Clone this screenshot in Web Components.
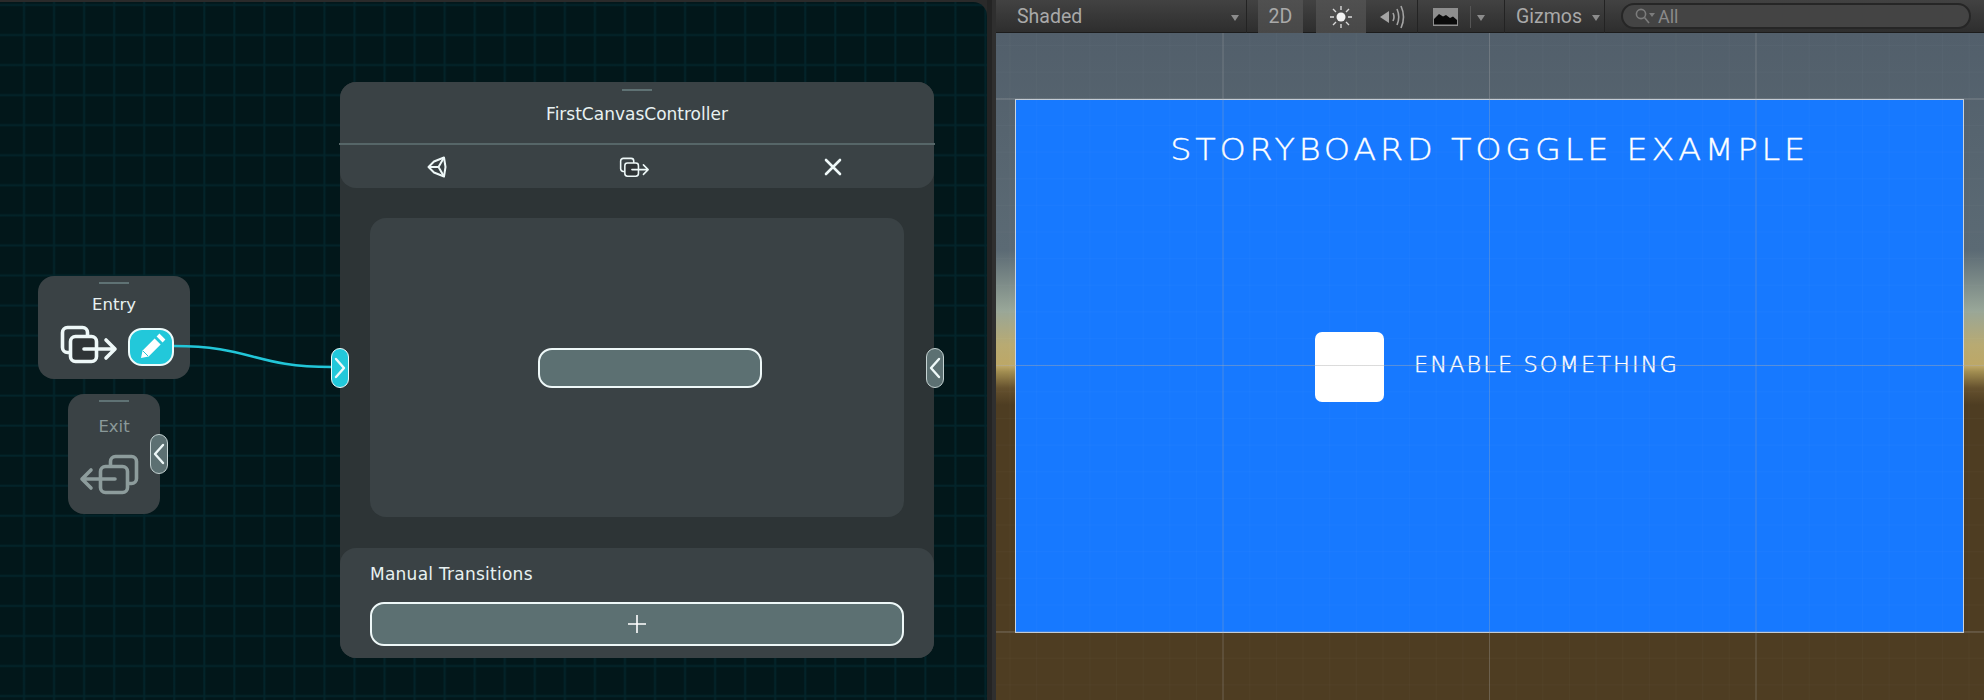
<!DOCTYPE html>
<html>
<head>
<meta charset="utf-8">
<title>Storyboard</title>
<style>
html, body { margin: 0; height: 100%; background: #2a2a2a; overflow: hidden; }
body { font-family: "DejaVu Sans", sans-serif; }
</style>
</head>
<body>
<app-shell>
  <graph-view slot="graph">
    <svg slot="wires" width="987" height="698" style="display:block">
      <path d="M174 344 C250 344 255 365 331 365" fill="none" stroke="#22c6d8" stroke-width="2.5"/>
    </svg>

    <graph-node name="Entry" style="--x:38px;--y:274px;--w:152px;--h:103px;--title-gap:11px;--row-gap:8px;--row-pad:20px">
      <ui-icon kind="enter" style="--iw:60px;--ih:42px"></ui-icon>
      <edit-button></edit-button>
    </graph-node>

    <graph-node name="Exit" dim style="--x:68px;--y:392px;--w:92px;--h:120px;--title-gap:15px;--row-gap:15px;--row-pad:10px">
      <ui-icon kind="exit" style="--iw:64px;--ih:46px"></ui-icon>
      <port-pin slot="ports" dir="left" style="--px:82px;--py:40px"></port-pin>
    </graph-node>

    <canvas-node name="FirstCanvasController" style="--x:340px;--y:80px">
      <port-pin slot="ports" dir="right" active style="--px:-9px;--py:266px"></port-pin>
      <port-pin slot="ports" dir="left" style="--px:586px;--py:266px"></port-pin>
      <ui-icon slot="actions" kind="unity" style="--iw:20px;--ih:22px;margin-right:2px"></ui-icon>
      <ui-icon slot="actions" kind="enter-small" style="--iw:32px;--ih:22px"></ui-icon>
      <ui-icon slot="actions" kind="close" style="--iw:20px;--ih:20px;margin-left:5px"></ui-icon>
    </canvas-node>
  </graph-view>

  <scene-view slot="scene">
    <scene-toolbar slot="toolbar"></scene-toolbar>
    <game-canvas title-text="STORYBOARD TOGGLE EXAMPLE" label="ENABLE SOMETHING"></game-canvas>
  </scene-view>
</app-shell>

<script>
const enterIcon = (w) => `<svg viewBox="0 0 60 42" fill="none" stroke="#eef8f8" stroke-width="${w}" stroke-linecap="round" stroke-linejoin="round">
    <rect x="4.5" y="4.5" width="25" height="25" rx="5"/>
    <rect x="12.5" y="13.5" width="26" height="25" rx="5" fill="#2f3436"/>
    <path d="M26 26H56M48 17L57 26L48 35"/></svg>`;

const ICONS = {
  enter: enterIcon(3.6),
  "enter-small": enterIcon(3),
  exit: `<svg viewBox="0 0 64 46" fill="none" stroke="#8d9c9c" stroke-width="3.6" stroke-linecap="round" stroke-linejoin="round">
    <rect x="32.5" y="4.5" width="26" height="27" rx="5"/>
    <rect x="22.5" y="14.5" width="27" height="26" rx="5" fill="#3a4245"/>
    <path d="M37 27H4M13 18L4 27L13 36"/></svg>`,
  unity: `<svg viewBox="0 0 20 22" fill="none" stroke="#eef8f8" stroke-width="2" stroke-linejoin="round">
    <path d="M1.5 11L7 5.5L17 1.5L18.5 11L17 20.5L7 16.5Z"/>
    <path d="M1.5 11H11.5M11.5 11L17 1.5M11.5 11L17 20.5"/></svg>`,
  close: `<svg viewBox="0 0 20 20" fill="none" stroke="#eef8f8" stroke-width="2.6" stroke-linecap="round">
    <path d="M3 3L17 17M17 3L3 17"/></svg>`,
};

class UiIcon extends HTMLElement {
  constructor() {
    super();
    this.attachShadow({ mode: "open" });
    this.shadowRoot.innerHTML = `<style>
      :host { display: block; width: var(--iw); height: var(--ih); flex: none; }
      svg { display: block; width: 100%; height: 100%; }
    </style>${ICONS[this.getAttribute("kind")] || ""}`;
  }
}
customElements.define("ui-icon", UiIcon);

const shellTemplate = document.createElement("template");
shellTemplate.innerHTML = `<style>
  :host { display: grid; grid-template-columns: 987px 9px 988px; width: 1984px; height: 700px; }
  .gutter { background: linear-gradient(90deg, #242424 0 5px, #2f2f2f 5px); }
</style>
<slot name="graph"></slot><div class="gutter"></div><slot name="scene"></slot>`;
class AppShell extends HTMLElement {
  constructor() {
    super();
    this.attachShadow({ mode: "open" });
    this.shadowRoot.appendChild(shellTemplate.content.cloneNode(true));
  }
}
customElements.define("app-shell", AppShell);

const graphTemplate = document.createElement("template");
graphTemplate.innerHTML = `<style>
  :host {
    display: block; position: relative; height: 698px; margin-top: 2px; overflow: hidden;
    border-radius: 0 14px 0 0;
    background-color: #02171a;
    background-image:
      linear-gradient(90deg, transparent 8.5px, #03242a 9.5px 10.5px, transparent 11.5px),
      linear-gradient(0deg, transparent 8.5px, #03242a 9.5px 10.5px, transparent 11.5px);
    background-size: 30.05px 30.05px;
    background-position: 14px 13px;
  }
  .wires { position: absolute; left: 0; top: 0; }
</style>
<slot></slot><div class="wires"><slot name="wires"></slot></div>`;
class GraphView extends HTMLElement {
  constructor() {
    super();
    this.attachShadow({ mode: "open" });
    this.shadowRoot.appendChild(graphTemplate.content.cloneNode(true));
  }
}
customElements.define("graph-view", GraphView);

const nodeTemplate = document.createElement("template");
nodeTemplate.innerHTML = `<style>
  :host {
    position: absolute; left: var(--x); top: var(--y); width: var(--w); height: var(--h);
    display: flex; flex-direction: column; align-items: center;
    background: #3a4245; border-radius: 16px; color: #e8f1f1;
    font: 16.5px/20px "DejaVu Sans", sans-serif;
  }
  :host([dim]) { color: #8a9999; }
  .handle { width: 30px; height: 2px; margin-top: 6px; background: #5f7274; flex: none; }
  .title { margin-top: var(--title-gap); }
  .row { align-self: stretch; display: flex; align-items: flex-start; gap: 10px; margin-top: var(--row-gap); padding-left: var(--row-pad); }
</style>
<div class="handle"></div>
<div class="title"></div>
<div class="row"><slot></slot></div>
<slot name="ports"></slot>`;
class GraphNode extends HTMLElement {
  constructor() {
    super();
    this.attachShadow({ mode: "open" });
    this.shadowRoot.appendChild(nodeTemplate.content.cloneNode(true));
    this.shadowRoot.querySelector(".title").textContent = this.getAttribute("name");
  }
}
customElements.define("graph-node", GraphNode);

const pinTemplate = document.createElement("template");
pinTemplate.innerHTML = `<style>
  :host {
    position: absolute; left: var(--px); top: var(--py); width: 18px; height: 40px; box-sizing: border-box;
    display: flex; align-items: center; justify-content: center;
    background: #5c7072; border: 1.5px solid #c4d2d2; border-radius: 9px;
  }
  :host([active]) { background: #22c8da; border-color: #eefbfb; }
  svg { display: block; }
</style>
<svg width="12" height="24" viewBox="0 0 12 24" fill="none" stroke="#eef8f8" stroke-width="2.4" stroke-linecap="round" stroke-linejoin="round"><path/></svg>`;
class PortPin extends HTMLElement {
  constructor() {
    super();
    this.attachShadow({ mode: "open" });
    this.shadowRoot.appendChild(pinTemplate.content.cloneNode(true));
    const d = this.getAttribute("dir") === "left" ? "M10 3L2 12L10 21" : "M2 3L10 12L2 21";
    this.shadowRoot.querySelector("path").setAttribute("d", d);
  }
}
customElements.define("port-pin", PortPin);

class EditButton extends HTMLElement {
  constructor() {
    super();
    this.attachShadow({ mode: "open" });
    this.shadowRoot.innerHTML = `<style>
      :host { display: block; width: 46px; height: 38px; margin-top: 5px; box-sizing: border-box; flex: none;
        background: #22c8da; border: 2px solid #eefbfb; border-radius: 14px; }
      svg { display: block; }
    </style>
    <svg width="42" height="34" viewBox="0 0 42 34">
      <path d="M11 28L12.6 20.4L24.6 8.4L30.6 14.4L18.6 26.4Z" fill="#fff"/>
      <path d="M26.6 6.4L29.4 3.6L35.4 9.6L32.6 12.4Z" fill="#fff"/>
      <path d="M13 21L18 26" stroke="#22c8da" stroke-width="1"/>
    </svg>`;
  }
}
customElements.define("edit-button", EditButton);

const canvasNodeTemplate = document.createElement("template");
canvasNodeTemplate.innerHTML = `<style>
  :host {
    position: absolute; left: var(--x); top: var(--y); width: 594px; height: 576px;
    display: flex; flex-direction: column; background: #2d3436; border-radius: 16px;
    color: #e8f1f1; font: 17px/20px "DejaVu Sans", sans-serif;
  }
  .head { height: 106px; flex: none; background: #3a4245; border-radius: 16px; display: flex; flex-direction: column; }
  .handle { width: 30px; height: 2px; margin: 7px auto 0; background: #5f7274; }
  .title { text-align: center; margin-top: 13px; height: 39px; box-sizing: border-box; }
  .rule { height: 2px; background: #566668; margin: 0 -1px; }
  .actions { flex: 1; display: grid; grid-template-columns: repeat(3, 1fr); justify-items: center; align-items: center; padding-right: 6px; }
  .stage { flex: none; height: 299px; margin: 30px 30px 31px; background: #3a4245; border-radius: 16px;
    display: flex; align-items: center; justify-content: center; }
  .pill { width: 224px; height: 40px; margin-left: 25px; box-sizing: border-box; background: #5c7072; border: 2px solid #eef8f8; border-radius: 14px; }
  .foot { flex: 1; background: #3a4245; border-radius: 16px; padding: 16px 30px 0; }
  .foot-label { letter-spacing: .25px; }
  .add { height: 44px; margin-top: 18px; box-sizing: border-box; background: #5c7072; border: 2px solid #eef8f8; border-radius: 14px;
    display: flex; align-items: center; justify-content: center; }
</style>
<div class="head">
  <div class="handle"></div>
  <div class="title"></div>
  <div class="rule"></div>
  <div class="actions"><slot name="actions"></slot></div>
</div>
<div class="stage"><div class="pill"></div></div>
<div class="foot">
  <div class="foot-label">Manual Transitions</div>
  <div class="add"><svg width="20" height="20" viewBox="0 0 20 20" stroke="#fff" stroke-width="1.6"><path d="M10 1V19M1 10H19"/></svg></div>
</div>
<slot name="ports"></slot>`;
class CanvasNode extends HTMLElement {
  constructor() {
    super();
    this.attachShadow({ mode: "open" });
    this.shadowRoot.appendChild(canvasNodeTemplate.content.cloneNode(true));
    this.shadowRoot.querySelector(".title").textContent = this.getAttribute("name");
  }
}
customElements.define("canvas-node", CanvasNode);

class ToolCell extends HTMLElement {
  constructor() {
    super();
    this.attachShadow({ mode: "open" });
    this.shadowRoot.innerHTML = `<style>
      :host { display: flex; align-items: center; box-sizing: border-box; width: var(--w); height: 33px; flex: none; margin-left: var(--ml, 0);
        padding: 0 var(--pr, 0) 0 var(--pl, 0); justify-content: var(--jc, flex-start); gap: var(--gap, 0);
        border-right: var(--br, 0) solid #232323; }
      :host([active]) { background: linear-gradient(#505050, #484848); }
    </style><slot></slot>`;
  }
}
customElements.define("tool-cell", ToolCell);

class DropCaret extends HTMLElement {
  constructor() {
    super();
    this.attachShadow({ mode: "open" });
    this.shadowRoot.innerHTML = `<style>
      :host { display: block; width: 0; height: 0; flex: none; margin-top: 3px;
        border: 4.5px solid transparent; border-top: 6px solid #8c8c8c; border-bottom: 0; }
    </style>`;
  }
}
customElements.define("drop-caret", DropCaret);

const toolbarTemplate = document.createElement("template");
toolbarTemplate.innerHTML = `<style>
  :host {
    display: flex; height: 33px; flex: none; box-sizing: border-box; padding-left: 11px;
    background: linear-gradient(#424242, #2d2d2d);
    box-shadow: inset 0 -1px 0 #1c1c1c;
    color: #a9a9a9; font: 19.5px/33px Roboto, sans-serif;
  }
  .search { flex: none; width: 350px; height: 26px; margin: 3px 0 0 16px; box-sizing: border-box; padding-left: 11px;
    display: flex; align-items: center; gap: 2px; background: #444; border: 2px solid #262626; border-radius: 13px;
    color: #8a8a8a; font-size: 18px; }
  svg { display: block; flex: none; }
</style>
<tool-cell style="--w:240px;--pl:10px;--pr:7px;--jc:space-between;--br:1px"><span>Shaded</span><drop-caret></drop-caret></tool-cell>
<tool-cell active style="--w:45px;--ml:11px;--jc:center">2D</tool-cell>
<tool-cell active style="--w:50px;--ml:13px;--jc:center">
  <svg width="24" height="24" viewBox="0 0 24 24" stroke="#d8d8d8" stroke-width="1.4" fill="none">
    <circle cx="12" cy="12" r="4.5" fill="#f2f2f2" stroke="none"/>
    <path d="M12 1V5M12 19V23M1 12H5M19 12H23M4 4L7 7M17 17L20 20M20 4L17 7M7 17L4 20"/>
  </svg>
</tool-cell>
<tool-cell style="--w:52px;--jc:center;--br:1px">
  <svg width="28" height="26" viewBox="0 0 28 26" fill="none" stroke="#a4a4a4" stroke-width="1.6">
    <path d="M2 13L11 7V19Z" fill="#a4a4a4" stroke="none"/>
    <path d="M15 9Q17 13 15 17M19 5Q22.5 13 19 21M23 2Q28 13 23 24"/>
  </svg>
</tool-cell>
<tool-cell style="--w:87px;--pl:15px;--gap:12px;--br:1px">
  <svg width="25" height="18" viewBox="0 0 25 18">
    <rect width="25" height="18" fill="#8e8e8e"/>
    <path d="M1 16.5V11L6 6L10 8.5L13 7L17 10L20 8.5L24 12V16.5Z" fill="#0a0a0a"/>
  </svg>
  <span style="width:1px;height:22px;background:#555"></span>
  <drop-caret style="margin-left:-6px"></drop-caret>
</tool-cell>
<tool-cell style="--w:100px;--pl:11px;--gap:10px;--br:1px"><span>Gizmos</span><drop-caret></drop-caret></tool-cell>
<div class="search">
  <svg width="22" height="18" viewBox="0 0 22 18" fill="none" stroke="#7c7c7c" stroke-width="1.6">
    <circle cx="7" cy="7" r="4.6"/><path d="M10.5 10.5L15 16"/><path d="M15 6H21L18 10Z" fill="#7c7c7c" stroke="none"/>
  </svg>
  <span>All</span>
</div>`;
class SceneToolbar extends HTMLElement {
  constructor() {
    super();
    this.attachShadow({ mode: "open" });
    this.shadowRoot.appendChild(toolbarTemplate.content.cloneNode(true));
  }
}
customElements.define("scene-toolbar", SceneToolbar);

const sceneTemplate = document.createElement("template");
sceneTemplate.innerHTML = `<style>
  :host { display: flex; flex-direction: column; height: 700px; }
  .viewport {
    flex: 1; position: relative; overflow: hidden; box-sizing: border-box; padding: 66px 0 0 19px;
    background: linear-gradient(#525f6b 0, #5b6a74 217px, #98a698 277px, #b8aa72 312px, #bda766 333px, #a08c50 339px, #65512e 355px, #4e3d22 372px);
  }
  .grid {
    position: absolute; inset: 0; pointer-events: none;
    background-image:
      linear-gradient(90deg, rgba(170,170,170,.3) 1px, transparent 1px),
      linear-gradient(0deg, rgba(170,170,170,.42) 1px, transparent 1px),
      linear-gradient(90deg, rgba(255,255,255,.018) 1px, transparent 1px),
      linear-gradient(0deg, rgba(255,255,255,.018) 1px, transparent 1px);
    background-size: 266.5px 266.5px, 266.5px 266.5px, 26.65px 26.65px, 26.65px 26.65px;
    background-position: 226.5px 0, 0 66.5px, 13.5px 0, 0 13px;
  }
</style>
<slot name="toolbar"></slot>
<div class="viewport"><slot></slot><div class="grid"></div></div>`;
class SceneView extends HTMLElement {
  constructor() {
    super();
    this.attachShadow({ mode: "open" });
    this.shadowRoot.appendChild(sceneTemplate.content.cloneNode(true));
  }
}
customElements.define("scene-view", SceneView);

const gameTemplate = document.createElement("template");
gameTemplate.innerHTML = `<style>
  :host {
    display: block; width: 949px; height: 534px; box-sizing: border-box; background: #1779ff; border: 1px solid #c9d3df;
    color: #fff; font-family: "DejaVu Sans", sans-serif; font-weight: 200; overflow: hidden;
    -webkit-text-stroke: .35px #fff;
  }
  .title { margin-top: 30px; height: 40px; font-size: 30px; line-height: 40px; letter-spacing: 3.4px; text-align: center; white-space: nowrap; transform: scaleX(1.115); }
  .row { display: flex; align-items: center; gap: 30px; margin: 158px 0 0 299px; }
  .box { width: 69px; height: 70px; background: #fff; border-radius: 7px; flex: none; margin-top: 4px; }
  .label { font-size: 20.5px; line-height: 24px; letter-spacing: 1.9px; white-space: nowrap; transform: scaleX(1.095); transform-origin: 0 50%; }
</style>
<div class="title"></div>
<div class="row"><div class="box"></div><div class="label"></div></div>`;
class GameCanvas extends HTMLElement {
  constructor() {
    super();
    this.attachShadow({ mode: "open" });
    this.shadowRoot.appendChild(gameTemplate.content.cloneNode(true));
    this.shadowRoot.querySelector(".title").textContent = this.getAttribute("title-text");
    this.shadowRoot.querySelector(".label").textContent = this.getAttribute("label");
  }
}
customElements.define("game-canvas", GameCanvas);
</script>
</body>
</html>
